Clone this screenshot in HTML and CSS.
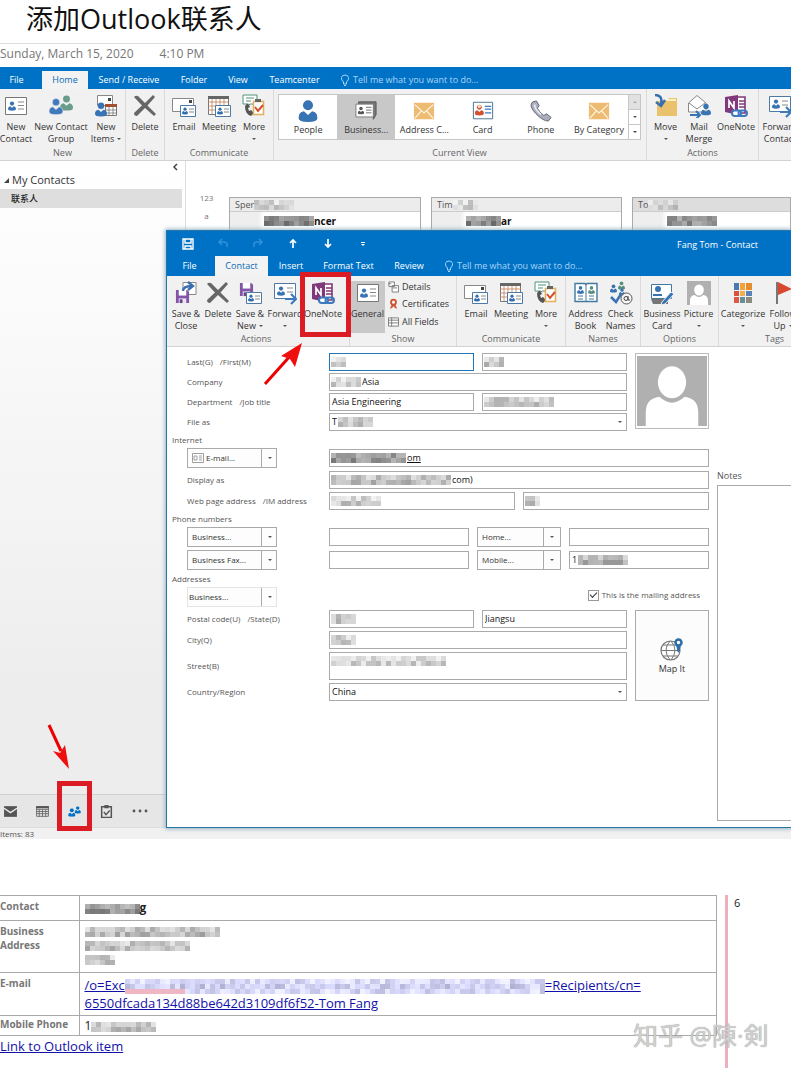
FILE: index.html
```html
<!DOCTYPE html>
<html lang="en">
<head>
<meta charset="utf-8">
<meta name="viewport" content="width=device-width, initial-scale=1">
<title>添加Outlook联系人</title>
<link rel="stylesheet" href="styles.css">
</head>
<body>
<svg class="defs" aria-hidden="true">
  <defs>
    <symbol id="person" viewBox="0 0 12 14"><circle cx="6" cy="3.3" r="3.2"/><path d="M0 11.5Q0 7.6 3.4 7.2L6 9.6 8.6 7.2Q12 7.6 12 11.5Q12 14 6 14T0 11.5Z"/></symbol>
    <symbol id="card" viewBox="0 0 24 24"><path d="M1.5 3.5h21v17h-21z" fill="#fff" stroke="#777"/><path d="M14 8h6M14 11.500h6M14 15h6" stroke="#888"/><use href="#person" x="4" y="7" width="8" height="10" fill="#3873b3"/></symbol>
    <symbol id="minicard" viewBox="0 0 16 12"><path d="M.5.5h15v11H.5z" fill="#fff" stroke="#4c79a6"/><path d="M9 4h5M9 7h5" stroke="#888"/><use href="#person" x="2" y="2" width="6" height="8" fill="#2f6bb0"/></symbol>
    <symbol id="group" viewBox="0 0 24 24"><use href="#person" x="11" y="1" width="13" height="16" fill="#689c8b"/><use href="#person" x="0" y="4" width="14" height="17" fill="#4179bd" stroke="#f1f1f1" stroke-width=".5"/></symbol>
    <symbol id="items" viewBox="0 0 24 24"><path d="M3.500 1.500h15v10h-15z" fill="#fff" stroke="#888"/><path d="M14 4h3v3h-3z" fill="#444"/><path d="M11.500 10.500h11v11h-11z" fill="#fff" stroke="#777"/><path d="M11 10h12v3H11z" fill="#a54e31"/><path d="M15 13v8M19 13v8M11 16h12M11 19h12" stroke="#777" stroke-width=".8"/><use href="#person" x="1" y="8" width="12" height="15" fill="#3873b3"/></symbol>
    <symbol id="cross" viewBox="0 0 24 24"><path d="M1 3Q4 0 7 4L12 9 20 1 22 3 14.500 11.500 23 20 21 22 12 14 4 22Q1 22 1 19L9 11.500Z" fill="#666"/></symbol>
    <symbol id="email" viewBox="0 0 24 24"><path d="M.5 4.500h21v13H.5z" fill="#fff" stroke="#888"/><path d="M17 6h3v3h-3z" fill="#444"/><use href="#minicard" x="8" y="11" width="16" height="12"/></symbol>
    <symbol id="meeting" viewBox="0 0 24 24"><path d="M1.500 2.500h20v18h-20z" fill="#fff" stroke="#777"/><path d="M1 2h21v3H1z" fill="#666"/><path d="M1 8h21M1 12h21M1 16h21M5 5v15M9 5v15M13 5v15M17 5v15" stroke="#c17e59" stroke-width=".8"/><use href="#minicard" x="8" y="11" width="16" height="12"/></symbol>
    <symbol id="more" viewBox="0 0 24 24"><path d="M1 1h14v9H8l-3 3v-3H1z" fill="#fff" stroke="#51947c"/><path d="M4 4h8M4 7h5" stroke="#51947c"/><path d="M3 12Q3 20 9 22l3-3-3-3-2 1-1-3 2-1-2-4z" fill="#555"/><path d="M11.500 7.500h10v13h-10z" fill="#fff" stroke="#e3b05e" stroke-width="1.500"/><path d="M13 5h6v3h-6z" fill="#666"/><path d="m13 13 3 4 5-6" fill="none" stroke="#d2502c" stroke-width="2"/></symbol>
    <symbol id="stack" viewBox="0 0 24 24"><path d="M4 2h19v14l-3 5V6H4z" fill="#777" stroke="#555"/><path d="M1 4.500h19v14H1z" fill="#fff" stroke="#777"/><use href="#person" x="3" y="7" width="7" height="9" fill="#555"/><path d="M12 8h6M12 11h6M12 14h6" stroke="#666"/></symbol>
    <symbol id="envelope" viewBox="0 0 24 24"><path d="M1 3h22v18H1z" fill="#edbb72"/><path d="m2 5 10 9L22 5M2 20l7-8M22 20l-7-8" fill="none" stroke="#fff3df" stroke-width="1.300"/></symbol>
    <symbol id="redcard" viewBox="0 0 24 24"><path d="M1.500 2.500h21v18h-21z" fill="#fff" stroke="#406b8d"/><path d="M14 7h7M14 10h7M14 14h7" stroke="#4179bd" stroke-width="1.500"/><use href="#person" x="3" y="4" width="10" height="14" fill="#d2512e"/><circle cx="8" cy="7" r="1.800" fill="#f8d9c5"/></symbol>
    <symbol id="phone" viewBox="0 0 24 24"><path d="M3 2Q-2 6 6 14.500T20 23l3-4-5-4-3 2Q10 13 8 9l2-3-3-5z" fill="#aaaebd" stroke="#5d6070"/><path d="M5 5q0 5 7 11" fill="none" stroke="#e6e7ee" stroke-width="2"/></symbol>
    <symbol id="move" viewBox="0 0 24 24"><path d="M3 7h9l3-3h8v18H3z" fill="#eac26b"/><path d="M13 6h9" stroke="#fff1bd" stroke-width="2"/><path d="M1 1q8 0 6 9M2 8l5 4 4-6" fill="none" stroke="#376eae" stroke-width="2.500"/></symbol>
    <symbol id="merge" viewBox="0 0 24 24"><path d="M1.500 9 10 1.500 19 9v9H1.500z" fill="#fff" stroke="#888"/><path d="m2 9 8 6 8-6" fill="none" stroke="#888"/><use href="#person" x="14" y="9" width="10" height="13" fill="#3873b3"/><path d="M3 21h10M9 17l4 4-4 4" fill="none" stroke="#3873b3" stroke-width="2"/></symbol>
    <symbol id="onenote" viewBox="0 0 24 24"><path d="M12 3h9v16h-9z" fill="#fff" stroke="#80397b" stroke-width="1.600"/><path d="M15 7h6M15 10h6M15 13h6" stroke="#80397b" stroke-width="1.500"/><path d="m1 3 13-2v20L1 18z" fill="#80397b"/><path d="M5 14V7l5 7V7" fill="none" stroke="#fff" stroke-width="1.700"/><rect x="8" y="16.500" width="9" height="5.500" rx="2.700" fill="#fff" stroke="#3d7abd" stroke-width="2"/><rect x="14.500" y="16.500" width="8.500" height="5.500" rx="2.700" fill="none" stroke="#3d7abd" stroke-width="2"/></symbol>
    <symbol id="forward" viewBox="0 0 24 24"><path d="M1.500 2.500h21v15h-21z" fill="#fff" stroke="#4c79a6"/><path d="M14 7h6M14 11h6" stroke="#888"/><use href="#person" x="4" y="5" width="8" height="10" fill="#3873b3"/><path d="M12 18h10M18 13l5 5-5 5" fill="none" stroke="#3d7abd" stroke-width="2.200"/></symbol>
    <symbol id="disk" viewBox="0 0 16 16"><path d="M1 1h12l2 2v12H1z" fill="#8355a6"/><path d="M4 1h8v6H4z" fill="#fff"/><path d="M4 10h8v5H4z" fill="#ece2f3"/><path d="M5 11h3v4H5z" fill="#694487"/></symbol>
    <symbol id="saveclose" viewBox="0 0 24 24"><path d="M9 1.500h13v12H9z" fill="#fff" stroke="#888"/><use href="#disk" x="1" y="8" width="15" height="15"/><path d="M9 10Q9 5 18 5M14 1l5 4-5 4" fill="none" stroke="#376eae" stroke-width="2.300"/></symbol>
    <symbol id="savenew" viewBox="0 0 24 24"><use href="#disk" x="1" y="1" width="15" height="15"/><use href="#minicard" x="8" y="11" width="16" height="12"/></symbol>
    <symbol id="details" viewBox="0 0 12 12"><path d="M1 .5h6v5H1zM4.500 4.500h7v7h-7zM.5 2.500h3M5 7h5" fill="#fff" stroke="#777"/></symbol>
    <symbol id="cert" viewBox="0 0 12 12"><circle cx="6" cy="4" r="2.700" fill="none" stroke="#cb5432" stroke-width="2"/><path d="m4 7-2 4 2-.5 2-2 2 2 2 .5-2-4z" fill="#cb5432"/></symbol>
    <symbol id="fields" viewBox="0 0 12 12"><path d="M.5 1.500h11v9H.5zM4 1v10M0 4h12M0 7h12" fill="#fff" stroke="#777"/></symbol>
    <symbol id="book" viewBox="0 0 24 24"><path d="M1 2.500h10l1 1 1-1h10v18H1z" fill="#fff" stroke="#43789f" stroke-width="1.400"/><path d="M12 3v18M4 15h5M4 18h5M15 15h5M15 18h5" stroke="#43789f"/><use href="#person" x="3" y="5" width="7" height="8" fill="#3873b3"/><use href="#person" x="14" y="5" width="7" height="8" fill="#568e80"/></symbol>
    <symbol id="checknames" viewBox="0 0 24 24"><use href="#person" x="9" y="0" width="7" height="9" fill="#568e80"/><use href="#person" x="1" y="3" width="7" height="9" fill="#3873b3"/><use href="#person" x="10" y="7" width="6" height="8" fill="#3873b3"/><path d="m2 16 5 5 5-8" fill="none" stroke="#3873b3" stroke-width="2.500"/><circle cx="17.500" cy="17.500" r="5.500" fill="#f6f6f6" stroke="#555"/><circle cx="17" cy="17.500" r="2" fill="none" stroke="#444"/><path d="M19 15v4h2" fill="none" stroke="#444"/></symbol>
    <symbol id="bizpen" viewBox="0 0 24 24"><path d="M1 18h17v5H3z" fill="#777"/><path d="M1.500 3.500h20v14h-20z" fill="#fff" stroke="#43789f"/><circle cx="8" cy="8" r="3" fill="#3873b3"/><path d="M3 14h9" stroke="#3873b3" stroke-width="2"/><path d="m12 21 9-10 3 2-9 10-4 1z" fill="#3873b3" stroke="#eee"/></symbol>
    <symbol id="avatar" viewBox="0 0 72 72"><path d="M0 0h72v72H0z" fill="#b0b0b0"/><ellipse cx="36" cy="27" rx="14.500" ry="16.500" fill="#fff"/><path d="M9 72V58q0-14 14-16 13 12 26 0 14 2 14 16v14z" fill="#fff"/></symbol>
    <symbol id="categories" viewBox="0 0 24 24"><path d="M3 2h5v7H3z" fill="#4b79b6"/><path d="M9 2h5v7H9z" fill="#f3a336"/><path d="M15 2h6v7h-6z" fill="#e58d2d"/><path d="M3 10h5v5H3z" fill="#d8553d"/><path d="M9 10h5v5H9z" fill="#f0b052"/><path d="M15 10h6v5h-6z" fill="#5b82b6"/><path d="M3 16h5v6H3z" fill="#dc5942"/><path d="M9 16h5v6H9z" fill="#668e9b"/><path d="M15 16h6v6h-6z" fill="#8a8a7d"/></symbol>
    <symbol id="flag" viewBox="0 0 24 24"><path d="M6 1v22" stroke="#777" stroke-width="2"/><path d="m7 1 14 7-14 6z" fill="#d8472f"/></symbol>
    <symbol id="globe" viewBox="0 0 24 24"><circle cx="10.500" cy="13.500" r="9.500" fill="#fff" stroke="#777" stroke-width="1.200"/><path d="M1 13.500h19M3 8h15M3 19h15M10 4q-8 9 0 19M11 4q8 9 0 19" fill="none" stroke="#777"/><path d="M18.500 15 17 9h3z" fill="#2d6da8" stroke="#2d6da8" stroke-width="1.500"/><circle cx="18.500" cy="5.500" r="3" fill="#fff" stroke="#2d6da8" stroke-width="2.500"/></symbol>
    <symbol id="bulb" viewBox="0 0 10 12"><path d="M3.500 8Q1 6 1.500 3.500T5 1t3.500 2.500T6.500 8v2h-3zM4 11.500h2" fill="none" stroke="#a8d4f5"/></symbol>
  </defs>
</svg>

<header class="note-head">
  <h1>添加Outlook联系人</h1>
  <p><time>Sunday, March 15, 2020</time><time>4:10 PM</time></p>
</header>

<main>
<section class="outlook" aria-label="Outlook">
  <nav class="tabs main-tabs">
    <button class="tab file">File</button><button class="tab active home">Home</button><button class="tab send">Send / Receive</button><button class="tab folder">Folder</button><button class="tab view">View</button><button class="tab team">Teamcenter</button>
    <button class="tell"><svg><use href="#bulb"/></svg>Tell me what you want to do...</button>
  </nav>
  <div class="ribbon">
    <div class="group g-new"><div class="tools">
      <button class="tool w-32"><svg><use href="#card"/></svg><span>New<br>Contact</span></button>
      <button class="tool w-58"><svg><use href="#group"/></svg><span>New Contact<br>Group</span></button>
      <button class="tool w-32"><svg><use href="#items"/></svg><span class="drop">New<br>Items</span></button>
    </div><h2>New</h2></div>
    <div class="group"><div class="tools">
      <button class="tool w-38"><svg><use href="#cross"/></svg>Delete</button>
    </div><h2>Delete</h2></div>
    <div class="group g-comm"><div class="tools">
      <button class="tool w-35"><svg><use href="#email"/></svg>Email</button>
      <button class="tool w-35"><svg><use href="#meeting"/></svg>Meeting</button>
      <button class="tool w-35"><svg><use href="#more"/></svg>More<span class="caret"></span></button>
    </div><h2>Communicate</h2></div>
    <div class="group g-view"><div class="gallery">
      <button class="choice"><svg><use href="#person" fill="#3873b3"/></svg>People</button>
      <button class="choice chosen"><svg><use href="#stack"/></svg>Business...</button>
      <button class="choice"><svg><use href="#envelope"/></svg>Address C...</button>
      <button class="choice"><svg><use href="#redcard"/></svg>Card</button>
      <button class="choice"><svg><use href="#phone"/></svg>Phone</button>
      <button class="choice"><svg><use href="#envelope"/></svg>By Category</button>
      <div class="spin"><button aria-label="Previous views" disabled><i class="up"></i></button><button aria-label="Next views"><i></i></button><button aria-label="All views"><i class="line"></i></button></div>
    </div><h2>Current View</h2></div>
    <div class="group g-act"><div class="tools">
      <button class="tool w-35"><svg><use href="#move"/></svg>Move<span class="caret"></span></button>
      <button class="tool w-32"><svg><use href="#merge"/></svg><span>Mail<br>Merge</span></button>
      <button class="tool w-42"><svg><use href="#onenote"/></svg>OneNote</button>
    </div><h2>Actions</h2></div>
    <div class="group"><div class="tools">
      <button class="tool w-42"><svg><use href="#forward"/></svg><span>Forward<br>Contact</span></button>
    </div></div>
  </div>

  <div class="workspace">
    <aside class="folders">
      <button class="collapse" aria-label="Collapse folder pane"><svg viewBox="0 0 6 8"><path d="M5 1 2 4l3 3" fill="none" stroke="#444" stroke-width="1.500"/></svg></button>
      <h2><i></i>My Contacts</h2>
      <a href="#contacts" class="folder-row">联系人</a>
    </aside>
    <div class="contacts" id="contacts">
      <div class="index"><span>123</span><span>a</span></div>
      <article><h3>Sper<svg class="mosaic" data-cols="8" data-rows="2" data-tone="205"></svg></h3><p><svg class="mosaic" data-cols="10" data-rows="2" data-tone="135"></svg>ncer</p></article>
      <article><h3>Tim<svg class="mosaic" data-cols="5" data-rows="2" data-tone="205"></svg></h3><p><svg class="mosaic" data-cols="7" data-rows="2" data-tone="135"></svg>ar</p></article>
      <article class="selected"><h3>To<svg class="mosaic" data-cols="6" data-rows="2" data-tone="195"></svg></h3><p><svg class="mosaic" data-cols="10" data-rows="2" data-tone="145"></svg></p></article>
    </div>
  </div>
  <nav class="modules">
    <button aria-label="Mail"><svg viewBox="0 0 14 12"><path d="M1 1h12v10H1z" fill="#555"/><path d="m1 3 6 4 6-4" fill="none" stroke="#eee" stroke-width="1.300"/></svg></button>
    <button aria-label="Calendar"><svg viewBox="0 0 14 12"><path d="M1.500 1.500h11v9h-11zM1 4h12M1 6h12M1 8h12M4 4v7M7 4v7M10 4v7" fill="none" stroke="#666" stroke-width=".8"/><path d="M1 1h12v2H1z" fill="#555"/></svg></button>
    <button aria-label="People"><svg viewBox="0 0 14 12"><use href="#person" x="7" y="1" width="6" height="7" fill="#0072c6"/><use href="#person" x="1" y="3" width="7" height="8" fill="#0072c6"/></svg><span class="mark"></span></button>
    <button aria-label="Tasks"><svg viewBox="0 0 14 12"><path d="M2.500 1.500h9v10h-9z" fill="none" stroke="#555" stroke-width="1.400"/><path d="M5 0h4v3H5z" fill="#555"/><path d="m4.500 6.500 2 2.500 3.500-4" fill="none" stroke="#555" stroke-width="1.300"/></svg></button>
    <button aria-label="More modules"><svg class="dots" viewBox="0 0 16 4"><circle cx="2" cy="2" r="1.400" fill="#555"/><circle cx="8" cy="2" r="1.400" fill="#555"/><circle cx="14" cy="2" r="1.400" fill="#555"/></svg></button>
    <svg class="arrow nav-arrow" viewBox="0 0 26 48"><path d="m3 2 12 26" stroke="#e00" stroke-width="3"/><path d="M23 46 7 28l7 2 5-8z" fill="#f00f0f"/></svg>
  </nav>
  <footer>Items: 83</footer>

  <section class="dialog" role="dialog" aria-label="Fang Tom - Contact">
    <header class="titlebar">
      <div class="quick">
        <button aria-label="Save"><svg viewBox="0 0 12 12"><path d="M1 1h10v10H1zM3 1v4h6V1M3 11V8h6v3" fill="none" stroke="#fff" stroke-width="1.400"/></svg></button>
        <button aria-label="Undo"><svg viewBox="0 0 12 12"><path d="M5 1 2 4l3 3M2 4h5q4 0 3 5" fill="none" stroke="#3290dd" stroke-width="1.500"/></svg></button>
        <button aria-label="Redo"><svg viewBox="0 0 12 12"><path d="m7 1 3 3-3 3M10 4H5Q1 4 2 9" fill="none" stroke="#3290dd" stroke-width="1.500"/></svg></button>
        <button aria-label="Previous item"><svg viewBox="0 0 12 12"><path d="M6 10V2M3 5l3-3 3 3" fill="none" stroke="#fff" stroke-width="1.700"/></svg></button>
        <button aria-label="Next item"><svg viewBox="0 0 12 12"><path d="M6 1v8M3 6l3 3 3-3" fill="none" stroke="#fff" stroke-width="1.700"/></svg></button>
        <button aria-label="Customize"><svg viewBox="0 0 12 12"><path d="M4 4h4v1H4zM4 6h4L6 8z" fill="#fff"/></svg></button>
      </div>
      <strong>Fang Tom - Contact</strong>
    </header>
    <nav class="tabs">
      <button class="tab dfile">File</button><button class="tab active contact">Contact</button><button class="tab insert">Insert</button><button class="tab format">Format Text</button><button class="tab review">Review</button>
      <button class="tell"><svg><use href="#bulb"/></svg>Tell me what you want to do...</button>
    </nav>
    <div class="ribbon">
      <div class="group g-dact"><div class="tools">
        <button class="tool w-32"><svg><use href="#saveclose"/></svg><span>Save &amp;<br>Close</span></button>
        <button class="tool w-32"><svg><use href="#cross"/></svg>Delete</button>
        <button class="tool w-32"><svg><use href="#savenew"/></svg><span class="drop">Save &amp;<br>New</span></button>
        <button class="tool w-38"><svg><use href="#forward"/></svg>Forward<span class="caret"></span></button>
        <button class="tool w-38 marked"><svg><use href="#onenote"/></svg>OneNote<span class="mark"></span>
          <svg class="arrow tool-arrow" viewBox="0 0 42 46"><path d="M3 43 29 14" stroke="#e00" stroke-width="3"/><path d="M40 2 33 26l-5-8-9-3z" fill="#f00f0f"/></svg></button>
      </div><h2>Actions</h2></div>
      <div class="group g-show"><div class="tools">
        <button class="tool w-35 pressed"><svg><use href="#card"/></svg>General</button>
        <div class="list"><button><svg><use href="#details"/></svg>Details</button><button><svg><use href="#cert"/></svg>Certificates</button><button><svg><use href="#fields"/></svg>All Fields</button></div>
      </div><h2>Show</h2></div>
      <div class="group g-comm"><div class="tools">
        <button class="tool w-35"><svg><use href="#email"/></svg>Email</button>
        <button class="tool w-35"><svg><use href="#meeting"/></svg>Meeting</button>
        <button class="tool w-35"><svg><use href="#more"/></svg>More<span class="caret"></span></button>
      </div><h2>Communicate</h2></div>
      <div class="group g-names"><div class="tools">
        <button class="tool w-35"><svg><use href="#book"/></svg><span>Address<br>Book</span></button>
        <button class="tool w-35"><svg><use href="#checknames"/></svg><span>Check<br>Names</span></button>
      </div><h2>Names</h2></div>
      <div class="group g-opt"><div class="tools">
        <button class="tool w-38"><svg><use href="#bizpen"/></svg><span>Business<br>Card</span></button>
        <button class="tool w-35"><svg><use href="#avatar"/></svg>Picture<span class="caret"></span></button>
      </div><h2>Options</h2></div>
      <div class="group g-tags"><div class="tools">
        <button class="tool w-48"><svg><use href="#categories"/></svg>Categorize<span class="caret"></span></button>
        <button class="tool w-32"><svg><use href="#flag"/></svg><span class="drop">Follow<br>Up</span></button>
      </div><h2>Tags</h2></div>
    </div>
    <div class="dialog-body">
      <form>
        <div class="block">
          <div class="rows tight">
            <div class="row"><span class="lab"><label for="last">Last(G)</label><label for="first">/First(M)</label></span><div class="pair"><div class="field focus"><svg class="mosaic" data-cols="3" data-rows="2" data-tone="205"></svg><input id="last"></div><div class="field"><svg class="mosaic" data-cols="4" data-rows="2" data-tone="190"></svg><input id="first"></div></div></div>
            <div class="row"><label class="lab" for="company">Company</label><div class="field"><svg class="mosaic" data-cols="6" data-rows="2" data-tone="205"></svg><input id="company" value="Asia"></div></div>
            <div class="row"><span class="lab"><label for="dept">Department</label><label for="job">/Job title</label></span><div class="pair"><div class="field"><input id="dept" value="Asia Engineering"></div><div class="field"><svg class="mosaic" data-cols="14" data-rows="2" data-tone="195"></svg><input id="job"></div></div></div>
            <div class="row"><label class="lab" for="fileas">File as</label><div class="field choose"><select id="fileas"><option>T</option></select><svg class="mosaic over" data-cols="7" data-rows="2" data-tone="195"></svg></div></div>
          </div>
          <svg class="portrait" role="img" aria-label="Contact picture"><use href="#avatar"/></svg>
        </div>
        <h3>Internet</h3>
        <div class="rows">
          <div class="row"><div class="split"><button type="button" id="mail-l"><svg viewBox="0 0 12 10"><path d="M.5.5h11v9H.5zM2 3h3v4H2zM7 3h3M7 5h3M7 7h3" fill="#fff" stroke="#888" stroke-width=".8"/></svg>E-mail...</button><button type="button" aria-label="Choose e-mail"><i></i></button></div><div class="field mail"><svg class="mosaic" data-cols="15" data-rows="2" data-tone="150"></svg><input aria-labelledby="mail-l" value="om"></div></div>
          <div class="row"><label class="lab" for="display">Display as</label><div class="field"><svg class="mosaic" data-cols="24" data-rows="2" data-tone="185"></svg><input id="display" value="com)"></div></div>
          <div class="row"><span class="lab"><label for="web">Web page address</label><label for="im">/IM address</label></span><div class="pair"><div class="field"><svg class="mosaic" data-cols="10" data-rows="2" data-tone="205"></svg><input id="web"></div><div class="field"><svg class="mosaic" data-cols="3" data-rows="2" data-tone="200"></svg><input id="im"></div></div></div>
        </div>
        <h3>Phone numbers</h3>
        <div class="rows">
          <div class="row"><div class="split"><button type="button" id="p1">Business...</button><button type="button" aria-label="Choose number"><i></i></button></div><div class="phones"><div class="field"><input aria-labelledby="p1"></div><div class="split"><button type="button" id="p2">Home...</button><button type="button" aria-label="Choose number"><i></i></button></div><div class="field"><input aria-labelledby="p2"></div></div></div>
          <div class="row"><div class="split"><button type="button" id="p3">Business Fax...</button><button type="button" aria-label="Choose number"><i></i></button></div><div class="phones"><div class="field"><input aria-labelledby="p3"></div><div class="split"><button type="button" id="p4">Mobile...</button><button type="button" aria-label="Choose number"><i></i></button></div><div class="field"><input aria-labelledby="p4" value="1"><svg class="mosaic over" data-cols="10" data-rows="2" data-tone="175"></svg></div></div></div>
        </div>
        <h3>Addresses</h3>
        <div class="rows">
          <div class="row"><div class="split plain"><button type="button">Business...</button><button type="button" aria-label="Choose address"><i></i></button></div><label class="mailing"><input type="checkbox" checked>This is the mailing address</label></div>
          <div class="block">
            <div class="rows">
              <div class="row"><span class="lab"><label for="postal">Postal code(U)</label><label for="state">/State(D)</label></span><div class="pair"><div class="field"><svg class="mosaic" data-cols="5" data-rows="2" data-tone="195"></svg><input id="postal"></div><div class="field"><input id="state" value="Jiangsu"></div></div></div>
              <div class="row"><label class="lab" for="city">City(Q)</label><div class="field"><svg class="mosaic" data-cols="5" data-rows="2" data-tone="195"></svg><input id="city"></div></div>
              <div class="row"><label class="lab" for="street">Street(B)</label><div class="field tall"><svg class="mosaic" data-cols="23" data-rows="2" data-tone="210"></svg><textarea id="street"></textarea></div></div>
              <div class="row"><label class="lab" for="country">Country/Region</label><div class="field choose"><select id="country"><option>China</option></select></div></div>
            </div>
            <button type="button" class="map"><svg><use href="#globe"/></svg>Map It</button>
          </div>
        </div>
      </form>
      <div class="notes"><label for="notes">Notes</label><textarea id="notes"></textarea></div>
    </div>
  </section>
</section>

<section class="summary">
  <div class="record">
    <table>
      <tr><th scope="row">Contact</th><td class="name"><svg class="mosaic" data-cols="11" data-rows="2" data-tone="150"></svg><b>g</b></td></tr>
      <tr><th scope="row">Business<br>Address</th><td class="address"><svg class="mosaic" data-cols="27" data-rows="2" data-tone="185"></svg><svg class="mosaic" data-cols="21" data-rows="2" data-tone="190"></svg><svg class="mosaic" data-cols="6" data-rows="2" data-tone="195"></svg></td></tr>
      <tr><th scope="row">E-mail</th><td class="mailto"><a href="#mail">/o=Exc<svg class="mosaic" data-cols="84" data-rows="3" data-tone="205" data-tint="1"></svg>=Recipients/cn=<br>6550dfcada134d88be642d3109df6f52-Tom Fang</a></td></tr>
      <tr class="slim"><th scope="row">Mobile Phone</th><td>1<svg class="mosaic" data-cols="13" data-rows="2" data-tone="195"></svg></td></tr>
    </table>
    <a class="item-link" href="#item">Link to Outlook item</a>
  </div>
  <div class="margin">6</div>
  <div class="watermark">知乎 @陳·剣</div>
</section>
</main>
<script src="mosaic.js"></script>
</body>
</html>
```

FILE: styles.css
```css
* { box-sizing: border-box; }
body {
  margin: 0;
  background: #fff;
  color: #333;
  font: 9px/12px "Open Sans", "Noto Sans CJK SC", sans-serif;
  overflow-x: hidden;
}
button, input, select, textarea { font: inherit; color: inherit; border-radius: 0; }
button { padding: 0; border: 0; background: none; }
h1, h2, h3, p { margin: 0; font-weight: 400; }
svg { display: block; flex: none; }
.defs { position: absolute; width: 0; height: 0; }

/* Note heading */
.note-head { height: 67px; }
.note-head h1 {
  width: 320px;
  height: 44px;
  padding-left: 26px;
  border-bottom: 1px solid #ddd;
  color: #111;
  font-size: 27px;
  line-height: 38px;
}
.note-head p { display: flex; gap: 26px; color: #777; font-size: 12px; line-height: 20px; }

/* Window shell */
.outlook { position: relative; overflow: hidden; }
.tabs { display: flex; height: 22px; background: #0072c6; color: #fff; }
.main-tabs { padding-top: 4px; }
.tab { flex: none; white-space: nowrap; }
.active { background: #f3f3f3; color: #0a6ab8; }
.file { width: 42px; padding-right: 9px; }
.home { width: 46px; }
.send { width: 82px; }
.folder { width: 48px; }
.view { width: 40px; }
.team { width: 73px; }
.tell { display: flex; align-items: center; gap: 3px; padding-left: 9px; color: #a8d4f5; white-space: nowrap; }
.tell svg { width: 10px; height: 12px; }
.ribbon { display: flex; height: 72px; background: #f1f1f1; border-bottom: 1px solid #d2d2d2; overflow: hidden; }
.group { display: flex; flex: none; flex-direction: column; justify-content: space-between; padding: 5px 0 1px; border-right: 1px solid #dadada; }
.group h2 { color: #666; font-size: 9px; line-height: 12px; text-align: center; }
.tools { display: flex; justify-content: center; height: 52px; }
.tool { display: flex; flex: none; flex-direction: column; align-items: center; justify-content: flex-start; white-space: nowrap; line-height: 12px; }
.tool > svg:first-child { width: 24px; height: 24px; margin-bottom: 3px; }
.w-32 { width: 32px; }
.w-35 { width: 35px; }
.w-38 { width: 38px; }
.w-42 { width: 42px; }
.w-48 { width: 48px; }
.w-58 { width: 58px; }
.caret, .drop::after, .split i, .spin i, .choose::after {
  display: inline-block;
  border: 2px solid transparent;
  border-top-color: #555;
  border-bottom: 0;
}
.caret { margin-top: 5px; }
.drop::after { content: ""; margin: 0 0 2px 3px; }
.g-new { width: 126px; }
.g-new .tools { justify-content: flex-start; }
.g-comm { width: 109px; }
.g-view { width: 373px; padding-left: 4px; padding-right: 5px; }
.g-act { width: 112px; }
.gallery { display: flex; height: 46px; background: #fff; border: 1px solid #c6c6c6; }
.choice { display: flex; flex: 1; flex-direction: column; align-items: center; justify-content: flex-end; gap: 2px; padding-bottom: 3px; white-space: nowrap; }
.choice svg { width: 22px; height: 22px; }
.chosen { background: #c8c8c8; }
.spin { display: flex; flex-direction: column; width: 12px; border-left: 1px solid #c6c6c6; }
.spin button { display: flex; flex: 1; align-items: center; justify-content: center; }
.spin button + button { border-top: 1px solid #c6c6c6; }
.spin button:disabled { background: #e1e1e1; }
.spin .up { border-top: 0; border-bottom: 2px solid #aaa; }
.spin .line { border-top-color: #444; box-shadow: 0 -2px 0 -1px #444; }

/* Folder pane and contact cards */
.workspace { display: grid; grid-template-columns: 185px 1fr; min-height: 633px; background: linear-gradient(#fff, #fcfcfc 15%, #ededed 85%); }
.folders { padding-top: 2px; }
.collapse { display: block; width: 6px; height: 8px; margin-left: 172px; }
.collapse svg { width: 6px; height: 8px; }
.folders h2 { display: flex; align-items: center; gap: 3px; padding-left: 4px; color: #333; font-size: 11px; line-height: 18px; }
.folders h2 i { border-left: 5px solid transparent; border-bottom: 5px solid #444; }
.folder-row { display: block; width: 182px; padding-left: 11px; background: #dedede; color: #222; font-weight: 500; line-height: 19px; text-decoration: none; }
.contacts { display: grid; grid-template-columns: 33px 192px 191px 1fr; gap: 10px; padding: 36px 0 0; background: #fff; border-left: 1px solid #ddd; }
.index { display: flex; flex-direction: column; align-items: center; gap: 6px; margin: -5px -8px 0 0; color: #777; font-size: 8px; }
.contacts article { border: 1px solid #aaa; background: linear-gradient(90deg, #eee 28px, #fff 34px); }
.contacts h3 { display: flex; align-items: center; height: 14px; padding-left: 5px; background: #ececec; border-bottom: 1px solid #ccc; color: #555; font-size: 9px; }
.contacts p { display: flex; align-items: center; height: 18px; margin-left: 34px; color: #111; font-size: 10px; font-weight: 700; }
.contacts .selected h3 { background: #ddd; }
.modules { position: relative; display: flex; align-items: center; height: 33px; background: #e6e6e6; border-top: 1px solid #d0d0d0; }
.modules button { position: relative; width: 32px; height: 32px; padding-left: 3px; }
.modules button svg { width: 15px; height: 13px; }
.modules .dots { width: 16px; height: 4px; margin-left: 1px; }
.outlook footer { height: 12px; background: #f1f1f1; border-top: 1px solid #ddd; color: #555; font-size: 8px; line-height: 12px; }

/* Callouts drawn over the controls */
.mark { position: absolute; border: 5px solid #dc1c24; pointer-events: none; }
.modules .mark { inset: -14px 4px -4px -7px; }
.marked { position: relative; }
.marked .mark { inset: -9px -9px -4px -4px; }
.arrow { position: absolute; pointer-events: none; }
.tool-arrow { width: 42px; height: 46px; left: -42px; top: 60px; }
.nav-arrow { width: 26px; height: 48px; left: 46px; top: -72px; }

/* Contact window */
.dialog { position: absolute; left: 166px; right: 0; top: 163px; bottom: 11px; display: flex; flex-direction: column; background: #fff; border: 1px solid #2676a8; border-right: 0; box-shadow: 0 0 4px 1px #96b3c6; }
.titlebar { display: flex; align-items: center; justify-content: space-between; height: 25px; padding: 0 33px 0 3px; background: #0072c6; color: #fff; }
.titlebar strong { padding-top: 3px; font-weight: 400; }
.quick { display: flex; }
.quick button { display: grid; place-items: center; width: 35px; height: 25px; }
.quick svg { width: 12px; height: 12px; }
.dialog .tabs { height: 20px; }
.dialog .ribbon { height: 71px; overflow: visible; }
.dfile { width: 48px; padding-right: 3px; }
.contact { width: 53px; }
.insert { width: 46px; }
.format { width: 69px; }
.review { width: 52px; }
.g-dact { width: 183px; }
.g-dact .tools { justify-content: flex-start; padding-left: 3px; }
.g-dact h2 { padding-right: 4px; }
.g-show { width: 107px; }
.g-show .tools, .g-tags .tools { justify-content: flex-start; }
.g-names { width: 75px; }
.g-opt { width: 78px; }
.g-tags { width: 112px; }
.pressed { background: #c8c8c8; }
.list { display: flex; flex-direction: column; justify-content: space-between; height: 52px; margin-top: -3px; padding-left: 3px; }
.list button { display: flex; align-items: center; gap: 3px; height: 17px; }
.list svg { width: 11px; height: 12px; }
.dialog-body { display: grid; grid-template-columns: 542px 1fr; gap: 8px; flex: 1; }
form { padding: 6px 0 0; color: #555; font-size: 8px; }
form h3 { padding-left: 5px; font-size: 8px; line-height: 17px; }
.rows { display: grid; flex: 1; gap: 3px; min-width: 0; }
.tight { gap: 2px; }
.row { display: grid; grid-template-columns: 162px minmax(0, 1fr); align-items: center; }
.lab { display: flex; gap: 7px; padding-left: 20px; white-space: nowrap; }
.block { display: flex; gap: 8px; }
.pair { display: grid; grid-template-columns: repeat(2, minmax(0, 1fr)); gap: 8px; }
.field { position: relative; display: flex; align-items: center; height: 18px; padding-left: 1px; background: #fff; border: 1px solid #aaa; color: #111; }
.field input, .field select, .field textarea { flex: 1; min-width: 0; padding: 0 0 0 1px; border: 0; outline: 0; background: none; appearance: none; resize: none; font-size: 9px; line-height: 12px; }
.focus { border: 1px solid #2476b8; }
.mail input { text-decoration: underline; }
.tall { height: 28px; align-items: flex-start; padding-top: 3px; }
.tall textarea { height: 20px; }
.choose::after { content: ""; margin-right: 4px; }
.over { position: absolute; left: 8px; }
.split { display: grid; grid-template-columns: 73px 17px; width: 90px; height: 20px; margin-left: 20px; border: 1px solid #aaa; background: #fdfdfd; color: #333; }
.split button { display: flex; align-items: center; gap: 2px; padding-left: 4px; }
.split button + button { justify-content: center; padding: 0; border-left: 1px solid #aaa; }
.split svg { width: 12px; height: 10px; }
.plain { border-color: #e4e4e4; }
.plain button:first-child { padding-left: 1px; }
.phones { display: grid; grid-template-columns: 140px 84px 140px; justify-content: space-between; align-items: center; }
.phones .split { grid-template-columns: 1fr 17px; width: 84px; margin: 0; }
.mailing { display: flex; align-items: center; justify-content: flex-end; gap: 3px; padding: 0 9px 4px 0; }
.mailing input { display: grid; place-items: center; width: 11px; height: 11px; margin: 0; border: 1px solid #999; background: #fff; appearance: none; }
.mailing input:checked::before { content: ""; width: 6px; height: 3px; margin-bottom: 2px; border: solid #333; border-width: 0 0 1px 1px; transform: rotate(-45deg); }
.portrait { width: 74px; height: 76px; padding: 1px; border: 1px solid #bbb; }
.map { display: flex; flex-direction: column; align-items: center; justify-content: center; gap: 2px; width: 74px; border: 1px solid #aaa; background: #fcfcfc; color: #333; font-size: 9px; }
.map svg { width: 24px; height: 24px; }
.notes { display: flex; flex-direction: column; gap: 3px; padding: 123px 0 6px; color: #555; }
.notes textarea { flex: 1; width: 100%; border: 1px solid #aaa; border-right: 0; background: #fff; resize: none; }

/* Contact summary */
.summary { position: relative; display: flex; gap: 8px; min-height: 173px; margin-top: 56px; }
.record { flex: none; width: 717px; }
table { width: 100%; border-collapse: collapse; color: #222; font-size: 12px; line-height: 17px; }
th, td { padding: 3px 4px 3px 5px; border: 1px solid #aaa; vertical-align: top; text-align: left; }
th { width: 79px; padding-left: 0; border-left: 0; color: #777; font-size: 10px; line-height: 14px; }
td .mosaic { display: inline-block; vertical-align: middle; }
.name { padding: 4px 5px; line-height: 16px; }
.address { padding-top: 6px; }
.address .mosaic { display: block; margin-bottom: 4px; }
.mailto { line-height: 18px; font-size: 13px; }
.slim th, .slim td { padding-top: 1px; padding-bottom: 1px; }
.mailto a, .item-link { color: #11a; }
.item-link { font-size: 13px; line-height: 20px; }
.margin { padding-left: 6px; border-left: 3px solid #edafbd; color: #222; font-size: 11px; line-height: 16px; }
.watermark { position: absolute; left: 633px; top: 124px; color: #d0d0d0; font-size: 25px; line-height: 32px; text-shadow: 0 0 1px #888; white-space: nowrap; }
```

FILE: mosaic.js
```js
// Fills each redaction patch with blocks of uneven tone, softer along its edges.
let seed = 11;
function next() {
  seed = (seed * 16807) % 2147483647;
  return seed / 2147483647;
}
document.querySelectorAll(".mosaic").forEach((patch) => {
  const { cols, rows, tone, tint } = patch.dataset;
  const size = 5;
  patch.setAttribute("width", cols * size);
  patch.setAttribute("height", rows * size);
  for (let y = 0; y < rows; y++) {
    for (let x = 0; x < cols; x++) {
      const cell = document.createElementNS("http://www.w3.org/2000/svg", "rect");
      const edge = y === 0 || (rows > 2 && y === rows - 1) ? 14 : 0;
      const value = Math.min(242, Math.round(+tone + edge + (next() - 0.5) * 60));
      const pink = tint && x < 12 && y === rows - 1;
      const color = pink ? "#efb6c4" : tint ? `rgb(${value},${value},${Math.min(255, value + 35)})` : `rgb(${value},${value},${value})`;
      cell.setAttribute("x", x * size);
      cell.setAttribute("y", y * size);
      cell.setAttribute("width", size);
      cell.setAttribute("height", size);
      cell.setAttribute("fill", color);
      patch.append(cell);
    }
  }
});
```
